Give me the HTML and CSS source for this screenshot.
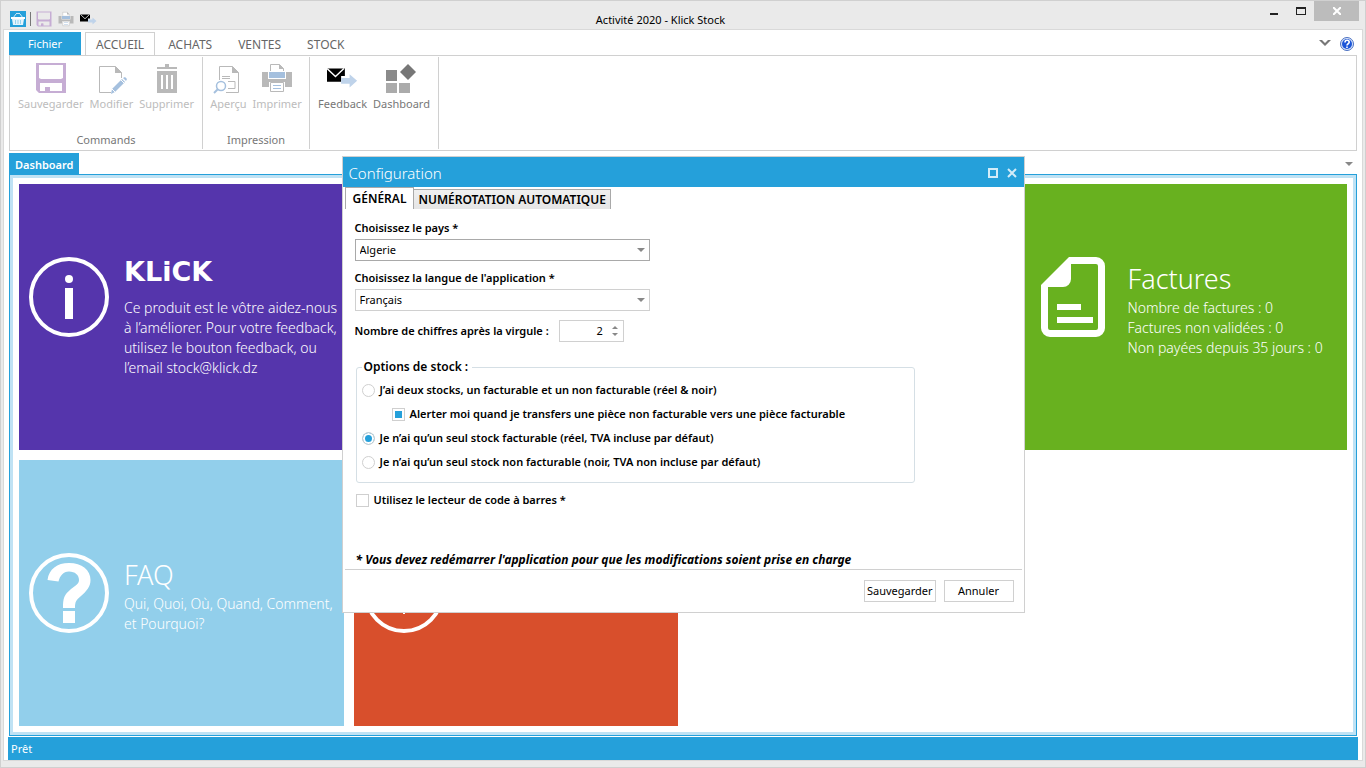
FILE: index.html
```html
<!DOCTYPE html>
<html lang="fr">
<head>
<title>Activité 2020 - Klick Stock</title>
	<meta charset="utf-8">
	<meta name="viewport" content="width=device-width, initial-scale=1.0">
	<link rel="stylesheet" href="styles.css">
</head>

<body>
<svg class="sprite" aria-hidden="true">
	<symbol id="ico-save" viewBox="0 0 32 32">
		<path fill="#c6add4" fill-rule="evenodd" d="M1 1h30v30H4l-3-3zM4 3v13l2 1h20l2-1V3zM5 21v8h5v-4h5v4h12v-8z"/>
		<path fill="#c6add4" d="M11 25h3v4h-3z"/>
	</symbol>
	<symbol id="ico-print" viewBox="0 0 32 32">
		<path fill="#b9b9b9" d="M1 10h6v7h18v-7h6v15h-7v-5H8v5H1z"/>
		<path fill="#fff" stroke="#b9b9b9" stroke-width="1" d="M9.500 9V2.500h9l4 4V9"/>
		<path fill="#b9b9b9" d="M18 2v5h5z"/>
		<path fill="#a5c0de" d="M8 10h16v6H8z"/>
		<path fill="#fff" stroke="#b9b9b9" d="M9.500 20.500h13v9h-13z"/>
		<path fill="#a5c0de" d="M12 23h8v1h-8zM12 26h8v1h-8z"/>
	</symbol>
	<symbol id="ico-mail" viewBox="0 0 34 22">
		<path d="M0 1h20v8h-4v6H0z"/>
		<path fill="none" stroke="#fff" stroke-width="1.500" d="M1 1l9 8.500L19 1"/>
		<path fill="#bfd3ea" d="M16 11h9V7l8 7-8 7v-4h-9z"/>
	</symbol>
</svg>

<div class="window">
	<header class="titlebar">
		<div class="quick">
			<svg class="app-icon" viewBox="0 0 16 16"><path fill="#25a0da" d="M0 0h16v16H0z"/><path fill="none" stroke="#cdeaf8" d="M3 7l3-4M13 7l-3-4M6 2.500h4"/><path fill="#fff" d="M1 6h14v2H1z"/><path fill="#e4f4fc" d="M2 8h12l-1 6H3z"/><path stroke="#25a0da" stroke-width="1" opacity=".4" d="M5.500 9v4M8 9v4M10.500 9v4"/></svg>
			<span class="sep"></span>
			<button type="button" class="q-save" aria-label="Sauvegarder"><svg viewBox="0 0 32 32"><use href="#ico-save"/></svg></button>
			<button type="button" class="q-print" aria-label="Imprimer"><svg viewBox="0 0 32 32"><use href="#ico-print"/></svg></button>
			<button type="button" class="q-mail" aria-label="Feedback"><svg viewBox="0 0 34 22"><use href="#ico-mail"/></svg></button>
		</div>
		<h1 class="title">Activité 2020 - Klick Stock</h1>
		<div class="controls">
			<button type="button" aria-label="Réduire"><svg width="10" height="10"><path fill="#222" d="M1 7h8v2H1z"/></svg></button>
			<button type="button" aria-label="Agrandir"><svg width="10" height="10"><path fill="#222" fill-rule="evenodd" d="M0 1h10v8H0zM1 3v5h8V3z"/></svg></button>
			<button type="button" class="close" aria-label="Fermer"><svg width="8" height="8"><path stroke="#fff" stroke-width="2" d="M0 0l8 8M8 0L0 8"/></svg></button>
		</div>
	</header>

	<div class="frame">
		<nav class="ribbon-tabs">
			<button type="button" class="file">Fichier</button>
			<button type="button" class="tab active">ACCUEIL</button>
			<button type="button" class="tab">ACHATS</button>
			<button type="button" class="tab">VENTES</button>
			<button type="button" class="tab">STOCK</button>
			<div class="ribbon-tools">
				<button type="button" aria-label="Réduire le ruban"><svg width="12" height="7"><path fill="#777" d="M0 0h3l3 3 3-3h3L6 6z"/></svg></button>
				<button type="button" aria-label="Aide"><svg width="14" height="14" viewBox="0 0 14 14"><circle cx="7" cy="7" r="6.500" fill="#dbe6fa" stroke="#4a70c0"/><circle cx="7" cy="7" r="5" fill="#1c56d8"/><path fill="none" stroke="#fff" stroke-width="1.600" d="M5 5.500c0-3 4.200-2.800 4.200-.2C9.200 6.800 7 6.700 7 8.500M7 9.500v1.600"/></svg></button>
			</div>
		</nav>

		<section class="ribbon">
			<div class="group group-commands">
				<div class="group-items">
					<button type="button" disabled><svg viewBox="0 0 32 32"><use href="#ico-save"/></svg>Sauvegarder</button>
					<button type="button" disabled>
						<svg viewBox="0 0 32 32"><path fill="none" stroke="#b9b9b9" d="M16 30.500H4.500v-26h16l6 6V16"/><path fill="#b9b9b9" d="M20 4v7h7z"/><path fill="#a5c0de" d="M27 17l3 3-10 10-4 2 1-5z"/><path fill="#a5c0de" d="M28 16l2-1 2 2-1 2z"/><path stroke="#fff" d="M17 27l3 3M26 18l3 3"/></svg>Modifier</button>
					<button type="button" disabled>
						<svg viewBox="0 0 32 32"><path fill="#b9b9b9" fill-rule="evenodd" d="M14 2h4v3h8v2H6V5h8zM6 9h20v22H6zM10 13v14h2V13zM15 13v14h2V13zM20 13v14h2V13z"/></svg>Supprimer</button>
				</div>
				<span class="group-name">Commands</span>
			</div>
			<div class="group group-print">
				<div class="group-items">
					<button type="button" disabled>
						<svg viewBox="0 0 32 32"><path fill="none" stroke="#b9b9b9" d="M7.500 18V4.500h13l6 6v20H14"/><path fill="#b9b9b9" d="M20 4v7h7z"/><path fill="none" stroke="#b9b9b9" d="M10 14.500h8M10 16.500h8M16 19.500h7v7h-7"/><circle cx="9" cy="24" r="4.500" fill="#fff" stroke="#a5c0de" stroke-width="1.500"/><path stroke="#a5c0de" stroke-width="2" d="M6 27l-4 4"/></svg>Aperçu</button>
					<button type="button" disabled><svg viewBox="0 0 32 32"><use href="#ico-print"/></svg>Imprimer</button>
				</div>
				<span class="group-name">Impression</span>
			</div>
			<div class="group group-misc">
				<div class="group-items">
					<button type="button"><svg viewBox="1 -6 34 34"><use href="#ico-mail" width="34" height="22"/></svg>Feedback</button>
					<button type="button">
						<svg viewBox="0 0 32 32"><path fill="#8a8a8a" d="M1 8h11v11H1z"/><path fill="#ababab" d="M1 21h11v10H1zM14 21h11v10H14z"/><path fill="#777" d="M23 2l8 8-8 8-8-8z"/></svg>Dashboard</button>
				</div>
			</div>
		</section>

		<nav class="doc-tabs">
			<button type="button" class="doc-tab">Dashboard</button>
			<button type="button" class="doc-menu" aria-label="Onglets"></button>
		</nav>

		<main class="dashboard">
			<article class="tile tile-klick">
				<svg class="tile-icon" viewBox="0 0 80 80"><circle cx="40" cy="40" r="38" fill="none" stroke="#fff" stroke-width="4"/><circle cx="40" cy="22" r="4" fill="#fff"/><path fill="#fff" d="M36 31h8v31h-8z"/></svg>
				<div class="tile-text">
					<h2 class="brand">KLiCK</h2>
					<p>Ce produit est le vôtre aidez-nous<br>à l’améliorer. Pour votre feedback,<br>utilisez le bouton feedback, ou<br>l’email stock@klick.dz</p>
				</div>
			</article>
			<article class="tile tile-invoices">
				<svg class="tile-icon" viewBox="0 0 80 80"><path fill="#fff" fill-rule="evenodd" d="M36 0h27a9 9 0 0 1 9 9v62a9 9 0 0 1-9 9H17a9 9 0 0 1-9-9V28zM38 7v15a8 8 0 0 1-8 8H15v41a2 2 0 0 0 2 2h46a2 2 0 0 0 2-2V9a2 2 0 0 0-2-2z"/><path fill="#fff" d="M24 47h24v6H24zM24 60h36v6H24z"/></svg>
				<div class="tile-text">
					<h2>Factures</h2>
					<p>Nombre de factures : 0<br>Factures non validées : 0<br>Non payées depuis 35 jours : 0</p>
				</div>
			</article>
			<article class="tile tile-low tile-faq">
				<svg class="tile-icon" viewBox="0 0 80 80"><circle cx="40" cy="40" r="38" fill="none" stroke="#fff" stroke-width="4"/><path fill="#fff" d="M18.500 27C20 16 28 10 40 10c13 0 21.500 7 21.500 17 0 7-4 11-9.500 16-5 4-6 6-6 12H34c0-10 1-13 8-19 5-4 8-5 8-9 0-5-4-8.500-10-8.500S31 23 29.500 28.500zM34 58h12v12H34z"/></svg>
				<div class="tile-text">
					<h2>FAQ</h2>
					<p>Qui, Quoi, Où, Quand, Comment,<br>et Pourquoi?</p>
				</div>
			</article>
			<article class="tile tile-low tile-alert">
				<svg class="tile-icon" viewBox="0 0 80 80"><circle cx="40" cy="40" r="38" fill="none" stroke="#fff" stroke-width="4"/><path fill="#fff" d="M38 18h4v36h-4zM39 58h2v3h-2z"/></svg>
			</article>
		</main>

		<footer class="status">Prêt</footer>
	</div>
</div>

<div class="overlay">
	<form class="dialog" role="dialog" aria-labelledby="dialog-title">
		<header class="dialog-head">
			<h2 id="dialog-title">Configuration</h2>
			<button type="button" aria-label="Agrandir"><svg width="10" height="10"><path fill="none" stroke="#d3ecf8" stroke-width="2" d="M1 1h8v8H1z"/></svg></button>
			<button type="button" aria-label="Fermer"><svg width="10" height="10"><path stroke="#d3ecf8" stroke-width="2" d="M1 1l8 8M9 1L1 9"/></svg></button>
		</header>
		<div class="dialog-tabs">
			<button type="button" class="active">GÉNÉRAL</button>
			<button type="button">NUMÉROTATION AUTOMATIQUE</button>
		</div>
		<div class="dialog-body">
			<label class="field" for="pays">Choisissez le pays *</label>
			<div class="select focus">
				<select id="pays"><option>Algerie</option></select>
			</div>
			<label class="field field-next" for="langue">Choisissez la langue de l'application *</label>
			<div class="select">
				<select id="langue"><option>Français</option></select>
			</div>
			<div class="digits">
				<label for="chiffres">Nombre de chiffres après la virgule :</label>
				<div class="spinner">
					<input type="text" inputmode="numeric" id="chiffres" value="2">
					<span class="arrows">
						<button type="button" class="up" aria-label="Plus"></button>
						<button type="button" class="down" aria-label="Moins"></button>
					</span>
				</div>
			</div>
			<fieldset>
				<legend>Options de stock :</legend>
				<label class="choice"><input type="radio" name="stock">J’ai deux stocks, un facturable et un non facturable (réel &amp; noir)</label>
				<label class="choice choice-sub"><input type="checkbox" checked>Alerter moi quand je transfers une pièce non facturable vers une pièce facturable</label>
				<label class="choice"><input type="radio" name="stock" checked>Je n’ai qu’un seul stock facturable (réel, TVA incluse par défaut)</label>
				<label class="choice"><input type="radio" name="stock">Je n’ai qu’un seul stock non facturable (noir, TVA non incluse par défaut)</label>
			</fieldset>
			<label class="choice barcode"><input type="checkbox">Utilisez le lecteur de code à barres *</label>
			<p class="note">* Vous devez redémarrer l'application pour que les modifications soient prise en charge</p>
		</div>
		<footer class="dialog-foot">
			<button type="submit">Sauvegarder</button>
			<button type="button">Annuler</button>
		</footer>
	</form>
</div>
</body>
</html>
```
FILE: styles.css
```css
* {
	box-sizing: border-box;
}
body, h1, h2, p {
	margin: 0;
	padding: 0;
}
body {
	font-family: "Noto Sans", "Open Sans", sans-serif;
	font-size: 11px;
	line-height: 16px;
	color: #000;
}
button, input, select {
	margin: 0;
	padding: 0;
	border: 0;
	background: none;
	color: inherit;
	font: inherit;
}
svg {
	display: block;
}
.sprite {
	position: absolute;
	width: 0;
	height: 0;
}

/* window */
.window {
	display: flex;
	flex-direction: column;
	min-height: 100vh;
	border: 1px solid #d0d0d0;
	background-color: #eaeaea;
}
.titlebar {
	display: flex;
	height: 28px;
	padding-right: 6px;
}
.quick {
	display: flex;
	align-items: center;
	gap: 4px;
	width: 97px;
	padding: 8px 0 0 9px;
}
.app-icon, .q-save svg, .q-print svg {
	width: 16px;
	height: 16px;
}
.sep {
	width: 1px;
	height: 14px;
	margin-right: 1px;
	background-color: #777;
}
.q-print {
	margin: 0 2px;
}
.q-mail svg {
	width: 17px;
	height: 11px;
}
.title {
	flex: 1;
	padding: 11px 37px 0 0;
	font-size: 11px;
	font-weight: 400;
	text-align: center;
}
.controls {
	display: flex;
	align-items: flex-start;
}
.controls button {
	display: flex;
	align-items: center;
	justify-content: center;
	width: 27px;
	height: 20px;
}
.controls .close {
	width: 45px;
	background-color: #bcbcbc;
}
.frame {
	display: flex;
	flex: 1;
	flex-direction: column;
	margin: 0 2px 6px;
	border: 1px solid #d9d9d9;
	background-color: #fff;
}

/* ribbon */
.ribbon-tabs {
	display: flex;
	margin: 2px 5px 0;
	height: 23px;
	font-size: 12px;
	color: #666;
}
.ribbon-tabs .file {
	width: 72px;
	margin-right: 4px;
	background-color: #25a0da;
	color: #fff;
	font-size: 11px;
}
.ribbon-tabs .tab {
	height: 24px;
	padding: 0 12px;
	border: 1px solid transparent;
	border-bottom: 0;
}
.ribbon-tabs .active {
	padding: 0 10px;
	border-color: #d0d0d0;
	background-color: #fff;
}
.ribbon-tools {
	display: flex;
	gap: 9px;
	align-items: center;
	margin-left: auto;
	padding-right: 3px;
}
.ribbon {
	display: flex;
	height: 96px;
	margin: 0 5px;
	padding: 1px 0;
	border: 1px solid #d0d0d0;
	color: #777;
}
.group {
	display: flex;
	flex-direction: column;
	align-items: center;
	justify-content: space-between;
	padding: 5px 0 1px;
	border-right: 1px solid #d0d0d0;
}
.group-commands {
	width: 193px;
}
.group-print {
	width: 107px;
}
.group-misc {
	width: 129px;
}
.group-items {
	display: flex;
	gap: 6px;
}
.group-items button {
	display: flex;
	flex-direction: column;
	align-items: center;
	gap: 2px;
}
.group-items button:disabled {
	color: #bcbcbc;
}
.group-items svg {
	width: 32px;
	height: 32px;
}

/* documents */
.doc-tabs {
	display: flex;
	justify-content: space-between;
	margin: 2px 5px 0;
	height: 21px;
}
.doc-tab {
	padding: 2px 6px 0;
	background-color: #25a0da;
	color: #fff;
	font-weight: 600;
}
.doc-menu {
	width: 17px;
}
.doc-menu::before, .select::after, .arrows button::before {
	content: "";
	display: block;
	margin: 0 auto;
	width: 0;
	border: 4px solid transparent;
	border-top-color: #888;
	border-bottom: 0;
}
.dashboard {
	display: grid;
	flex: 1;
	grid-template-columns: repeat(4, 1fr);
	grid-template-rows: 1fr 1fr;
	gap: 10px;
	margin: 0 5px;
	padding: 9px;
	border: 1px solid #25a0da;
	box-shadow: inset 0 0 0 3px #bfe2f4;
}
.tile {
	display: flex;
	gap: 15px;
	padding: 73px 0 0 10px;
	color: #fff;
	overflow: hidden;
}
.tile-low {
	padding-top: 93px;
}
.tile-klick {
	background-color: #5535ac;
}
.tile-invoices {
	grid-column: 4;
	background-color: #68b11f;
}
.tile-faq {
	background-color: #92cfeb;
}
.tile-alert {
	background-color: #d84f2c;
}
.tile-icon {
	flex: none;
	width: 80px;
	height: 80px;
}
.tile-text {
	font-size: 14px;
	font-weight: 300;
	line-height: 20px;
	white-space: nowrap;
}
.tile-text h2 {
	height: 41px;
	font-size: 27px;
	font-weight: 300;
	line-height: 44px;
}
.tile-text .brand {
	font-family: "DejaVu Sans", sans-serif;
	font-weight: 700;
	line-height: 30px;
}
.status {
	height: 23px;
	margin: 1px 4px 0;
	padding: 0 3px;
	background-color: #25a0da;
	color: #fff;
	line-height: 24px;
}

/* dialog */
.overlay {
	position: fixed;
	inset: 0;
	display: flex;
	align-items: center;
	justify-content: center;
	padding-top: 1px;
}
.dialog {
	width: 683px;
	max-width: 100%;
	border: 1px solid #d0d0d0;
	background-color: #fff;
	font-weight: 600;
}
.dialog-head {
	display: flex;
	align-items: center;
	gap: 9px;
	height: 30px;
	padding: 2px 7px 0 6px;
	background-color: #25a0da;
	color: #fff;
}
.dialog-head h2 {
	flex: 1;
	font-size: 15px;
	font-weight: 300;
	line-height: 28px;
}
.dialog-tabs {
	display: flex;
	align-items: flex-end;
	height: 22px;
	padding-left: 2px;
	font-size: 12px;
}
.dialog-tabs button {
	height: 20px;
	padding: 0 4px;
	border: 1px solid #a9a9a9;
	border-width: 1px 1px 0 0;
	background: linear-gradient(#f0f0f0, #e5e5e5);
}
.dialog-tabs .active {
	height: 22px;
	padding: 0 7px;
	border-left-width: 1px;
	background: #fff;
}
.dialog-body {
	padding: 8px 12px 0;
}
.field {
	display: block;
	line-height: 22px;
}
.field-next {
	margin-top: 6px;
}
.select {
	display: flex;
	align-items: center;
	width: 295px;
	height: 22px;
	border: 1px solid #d0d0d0;
}
.select.focus {
	border-color: #a9a9a9;
}
.select select {
	flex: 1;
	height: 20px;
	margin-right: -14px;
	padding-left: 4px;
	appearance: none;
	font-weight: 400;
}
.select::after {
	margin: 0 4px 0 0;
}
.digits {
	display: flex;
	align-items: center;
	gap: 10px;
	margin: 9px 0 17px;
}
.spinner {
	display: flex;
	width: 65px;
	height: 22px;
	border: 1px solid #d0d0d0;
}
.spinner input {
	flex: 1;
	min-width: 0;
	font-weight: 400;
	text-align: right;
}
.arrows {
	display: flex;
	flex-direction: column;
	justify-content: center;
	gap: 4px;
	width: 20px;
	padding-left: 4px;
}
.arrows button::before {
	border-width: 3px 3px 0;
}
.arrows .up::before {
	transform: rotate(180deg);
}
fieldset {
	width: 559px;
	max-width: 100%;
	margin: 0 1px;
	padding: 3px 5px 8px;
	border: 1px solid #d5dfe5;
	border-radius: 3px;
}
legend {
	padding: 0 4px 0 2px;
	font-size: 12px;
}
.choice {
	display: flex;
	align-items: center;
	gap: 5px;
	height: 24px;
}
.choice-sub {
	padding-left: 30px;
}
.choice input {
	flex: none;
	width: 13px;
	height: 13px;
	border: 1px solid #cfcfcf;
	background-color: #fff;
	appearance: none;
}
.choice input[type="radio"] {
	border-radius: 50%;
}
.choice input:checked {
	background-color: #25a0da;
	box-shadow: inset 0 0 0 2px #fff;
}
.barcode {
	margin: 5px 1px 0;
}
.note {
	margin: 38px 1px 0;
	font-size: 12px;
	font-style: italic;
	font-weight: 700;
	line-height: 19px;
}
.dialog-foot {
	display: flex;
	justify-content: flex-end;
	gap: 8px;
	margin: 0 2px;
	padding: 10px 8px;
	border-top: 1px solid #d0d0d0;
	font-weight: 400;
}
.dialog-foot button {
	min-width: 70px;
	height: 22px;
	padding: 0 2px;
	border: 1px solid #d0d0d0;
}
```
